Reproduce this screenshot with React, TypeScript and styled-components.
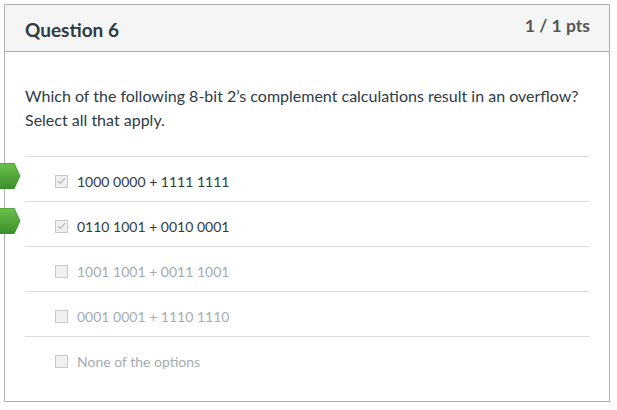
import React from "react";
import styled, { createGlobalStyle } from "styled-components";

const Global = createGlobalStyle`
  html, body { margin: 0; padding: 0; background: #ffffff; }
  body { font-family: Lato, "Noto Sans", sans-serif; color: #2d3b45; }
`;

const Page = styled.div`
  padding: 4px 7px 8px 4px;
`;

const Card = styled.section`
  border: 1px solid #b0b0b0;
  height: 398px;
  box-sizing: border-box;
  background: #fff;
`;

const Header = styled.header`
  display: flex;
  justify-content: space-between;
  align-items: flex-start;
  height: 47px;
  box-sizing: border-box;
  background: #f5f5f5;
  border-bottom: 1px solid #b0b0b0;
  padding: 0 19px 0 20px;
`;

const Title = styled.h2`
  margin: 12px 0 0;
  font-size: 19px;
  line-height: 26px;
  font-weight: 700;
  color: #2d3b45;
`;

const Points = styled.div`
  margin-top: 10px;
  font-size: 17.5px;
  line-height: 22px;
  font-weight: 700;
  color: #555555;
`;

const Body = styled.div`
  padding: 32px 19px 0 20px;
`;

const Prompt = styled.p`
  margin: 0 0 24px;
  font-size: 16px;
  line-height: 24px;
  color: #2d3b45;
`;

const Answers = styled.ul`
  list-style: none;
  margin: 0;
  padding: 0;
`;

const Answer = styled.li`
  position: relative;
  display: flex;
  align-items: center;
  height: 45px;
  box-sizing: border-box;
  border-top: 1px solid #dcdcdc;
  padding: 4px 0 0 30px;
`;

const Box = styled.span`
  display: inline-flex;
  align-items: center;
  justify-content: center;
  width: 11px;
  height: 11px;
  border: 1px solid #c8c8c8;
  background: #f0f0f0;
  margin-right: 9px;
  flex: none;
`;

const Label = styled.span<{ $checked?: boolean }>`
  font-size: 14px;
  color: ${(p) => (p.$checked ? "#2d3b45" : "#a5acb1")};
`;

const Marker = styled.svg`
  position: absolute;
  left: -27px;
  top: 6px;
`;

const options = [
  { text: "1000 0000 + 1111 1111", checked: true },
  { text: "0110 1001 + 0010 0001", checked: true },
  { text: "1001 1001 + 0011 1001", checked: false },
  { text: "0001 0001 + 1110 1110", checked: false },
  { text: "None of the options", checked: false },
];

function CorrectMarker() {
  return (
    <Marker width="24" height="26" viewBox="0 0 24 26">
      <defs>
        <linearGradient id="g" x1="0" y1="0" x2="0" y2="1">
          <stop offset="0" stopColor="#6cc04a" />
          <stop offset="1" stopColor="#3b8f2b" />
        </linearGradient>
      </defs>
      <path d="M0 0 H16 L22 13 L16 26 H0 Z" fill="url(#g)" stroke="#3a8a2c" strokeWidth="0.8" />
    </Marker>
  );
}

export default function App() {
  return (
    <>
      <Global />
      <Page>
        <Card>
          <Header>
            <Title>Question 6</Title>
            <Points>1 / 1 pts</Points>
          </Header>
          <Body>
            <Prompt>
              Which of the following 8-bit 2’s complement calculations result in an overflow?
              <br />
              Select all that apply.
            </Prompt>
            <Answers>
              {options.map((o) => (
                <Answer key={o.text}>
                  {o.checked && <CorrectMarker />}
                  <Box>
                    {o.checked && (
                      <svg width="9" height="8" viewBox="0 0 9 8">
                        <path d="M1 4.2 L3.5 6.5 L8 1.2" fill="none" stroke="#b8b8b8" strokeWidth="1.2" />
                      </svg>
                    )}
                  </Box>
                  <Label $checked={o.checked}>{o.text}</Label>
                </Answer>
              ))}
            </Answers>
          </Body>
        </Card>
      </Page>
    </>
  );
}
